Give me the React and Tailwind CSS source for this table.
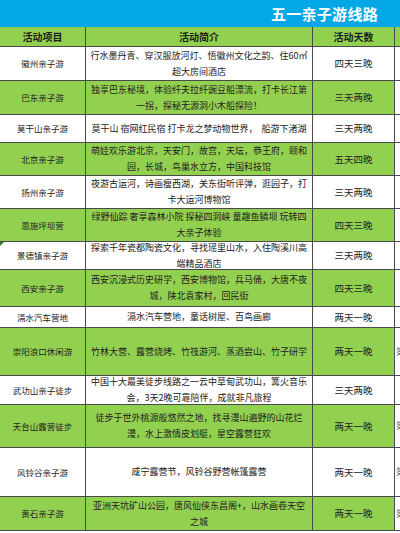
import React from "react";

const rows = [
  { name: "徽州亲子游", desc: ["行水墨丹青、穿汉服放河灯、悟徽州文化之韵、住60㎡", "超大房间酒店"], days: "四天三晚", h: "h-[34px]", g: false },
  { name: "巴东亲子游", desc: ["独享巴东秘境，体验纤夫拉纤豌豆船漂流，打卡长江第", "一拐，探秘无源洞小木船探险！"], days: "三天两晚", h: "h-[34px]", g: true },
  { name: "莫干山亲子游", desc: ["莫干山 宿网红民宿 打卡龙之梦动物世界，  船游下渚湖"], days: "三天两晚", h: "h-[28px]", g: false },
  { name: "北京亲子游", desc: ["萌娃欢乐游北京，天安门，故宫，天坛，恭王府，颐和", "园，长城，鸟巢水立方，中国科技馆"], days: "五天四晚", h: "h-[33px]", g: true },
  { name: "扬州亲子游", desc: ["夜游古运河，诗画瘦西湖，关东街听评弹，逛园子，打", "卡大运河博物馆"], days: "三天两晚", h: "h-[33px]", g: false },
  { name: "恩施坪坝营", desc: ["绿野仙踪 奢享森林小院 探秘四洞峡 童趣鱼鳞坝 玩转四", "大亲子体验"], days: "四天三晚", h: "h-[33px]", g: true },
  { name: "景德镇亲子游", desc: ["探索千年瓷都陶瓷文化，寻找瑶里山水，入住陶溪川高", "端精品酒店"], days: "三天两晚", h: "h-[28px]", g: false, mark: true },
  { name: "西安亲子游", desc: ["西安沉浸式历史研学，西安博物馆，兵马俑，大唐不夜", "城，陕北袁家村，回民街"], days: "四天三晚", h: "h-[37px]", g: true },
  { name: "滆水汽车营地", desc: ["滆水汽车营地，童话树屋、百鸟画廊"], days: "两天一晚", h: "h-[21px]", g: false },
  { name: "崇阳浪口休闲游", desc: ["竹林大营、露营烧烤、竹筏游河、蒸酒尝山、竹子研学"], days: "两天一晚", h: "h-[48px]", g: true, extra: "第" },
  { name: "武功山亲子徒步", desc: ["中国十大最美徒步线路之一云中草甸武功山，篝火音乐", "会，3天2晚可靠陪伴，成就非凡旅程"], days: "三天两晚", h: "h-[29px]", g: false },
  { name: "天台山露营徒步", desc: ["徒步于世外桃源般悠然之地，找寻漫山遍野的山花烂", "漫，水上激情皮划艇，星空露营狂欢"], days: "两天一晚", h: "h-[43px]", g: true, extra: "第" },
  { name: "风铃谷亲子游", desc: ["咸宁露营节，风铃谷野营帐篷露营"], days: "两天一晚", h: "h-[49px]", g: false, extra: "第" },
  { name: "黄石亲子游", desc: ["亚洲天坑矿山公园，唐风仙侠东昌阁+，山水画卷天空", "之城"], days: "两天一晚", h: "h-[34px]", g: true, extra: "第" },
];

export default function App() {
  const font = { fontFamily: '"Noto Sans CJK SC", "Noto Sans", sans-serif' };
  return (
    <div className="w-[400px] h-[533px] overflow-hidden bg-white" style={font}>
      <div className="h-[27px] bg-[#03a7e6] flex items-center justify-end pr-[22px]">
        <span className="text-white font-bold text-[15px] leading-none tracking-[0.3px]">五一亲子游线路</span>
      </div>
      <div className="grid grid-cols-[86px_227px_82px_5px] h-[20px] bg-[#92d050] border-b border-[#4a4a4a] text-[10px] font-bold text-[#1c1c1c]">
        <div className="flex items-center justify-center border-r border-[#4a4a4a]">活动项目</div>
        <div className="flex items-center justify-center border-r border-[#4a4a4a]">活动简介</div>
        <div className="flex items-center justify-center border-r border-[#4a4a4a]">活动天数</div>
        <div></div>
      </div>
      {rows.map((r, i) => (
        <div key={i} className={`grid grid-cols-[86px_227px_82px_5px] ${r.h} border-b border-[#4a4a4a] text-[#222]`}>
          <div className={`relative flex items-center justify-center border-r border-[#4a4a4a] text-[8.5px] whitespace-nowrap ${r.g ? "bg-[#92d050]" : "bg-white"}`}>
            {r.mark && <span className="absolute left-0 top-0 w-0 h-0 border-t-[4px] border-r-[4px] border-t-[#2f7d1e] border-r-transparent"></span>}
            {r.name}
          </div>
          <div className={`flex flex-col items-center justify-center overflow-hidden border-r border-[#4a4a4a] text-[9px] leading-[16px] whitespace-pre ${r.g ? "bg-[#92d050]" : "bg-white"}`}>
            {r.desc.map((l, j) => (
              <span key={j}>{l}</span>
            ))}
          </div>
          <div className={`flex items-center justify-center border-r border-[#4a4a4a] text-[9.5px] ${r.g ? "bg-[#92d050]" : "bg-white"}`}>
            {r.days}
          </div>
          <div className="bg-white overflow-hidden flex items-center pl-[1px] text-[9px] text-[#555] whitespace-nowrap">
            {r.extra || ""}
          </div>
        </div>
      ))}
    </div>
  );
}
